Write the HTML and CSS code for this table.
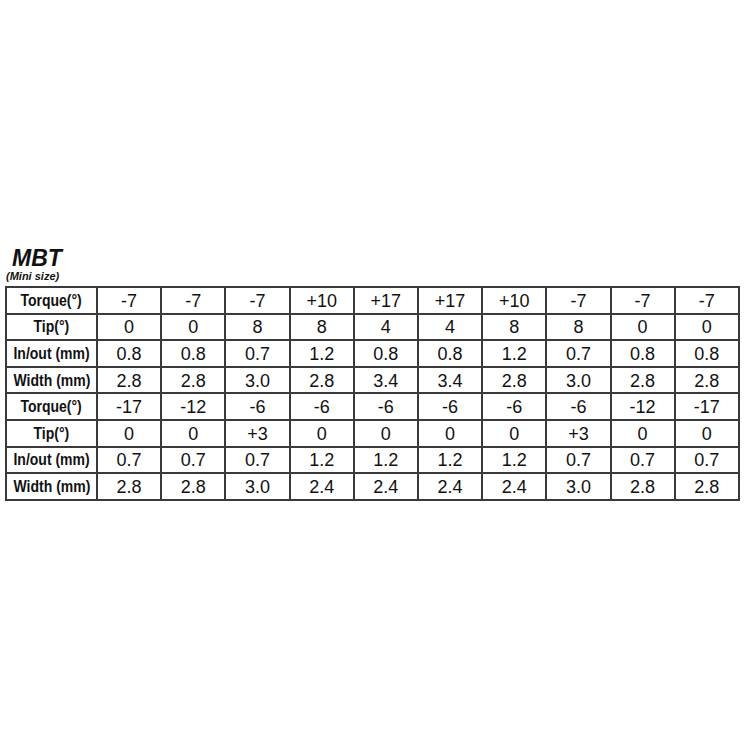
FILE: index.html
```html
<!DOCTYPE html>
<html>
<head>
<meta charset="utf-8">
<link rel="stylesheet" href="styles.css">
</head>
<body>
<div class="page">
  <div class="title">MBT</div>
  <div class="subtitle">(Mini size)</div>
  <table class="spec">
    <colgroup>
      <col class="c-head">
      <col><col><col><col><col><col><col><col><col><col>
    </colgroup>
    <tbody>
      <tr><th><span class="lbl">Torque(°)</span></th><td>-7</td><td>-7</td><td>-7</td><td>+10</td><td>+17</td><td>+17</td><td>+10</td><td>-7</td><td>-7</td><td>-7</td></tr>
      <tr><th><span class="lbl">Tip(°)</span></th><td>0</td><td>0</td><td>8</td><td>8</td><td>4</td><td>4</td><td>8</td><td>8</td><td>0</td><td>0</td></tr>
      <tr><th><span class="lbl">In/out (mm)</span></th><td>0.8</td><td>0.8</td><td>0.7</td><td>1.2</td><td>0.8</td><td>0.8</td><td>1.2</td><td>0.7</td><td>0.8</td><td>0.8</td></tr>
      <tr><th><span class="lbl">Width (mm)</span></th><td>2.8</td><td>2.8</td><td>3.0</td><td>2.8</td><td>3.4</td><td>3.4</td><td>2.8</td><td>3.0</td><td>2.8</td><td>2.8</td></tr>
      <tr><th><span class="lbl">Torque(°)</span></th><td>-17</td><td>-12</td><td>-6</td><td>-6</td><td>-6</td><td>-6</td><td>-6</td><td>-6</td><td>-12</td><td>-17</td></tr>
      <tr><th><span class="lbl">Tip(°)</span></th><td>0</td><td>0</td><td>+3</td><td>0</td><td>0</td><td>0</td><td>0</td><td>+3</td><td>0</td><td>0</td></tr>
      <tr><th><span class="lbl">In/out (mm)</span></th><td>0.7</td><td>0.7</td><td>0.7</td><td>1.2</td><td>1.2</td><td>1.2</td><td>1.2</td><td>0.7</td><td>0.7</td><td>0.7</td></tr>
      <tr><th><span class="lbl">Width (mm)</span></th><td>2.8</td><td>2.8</td><td>3.0</td><td>2.4</td><td>2.4</td><td>2.4</td><td>2.4</td><td>3.0</td><td>2.8</td><td>2.8</td></tr>
    </tbody>
  </table>
</div>
</body>
</html>
```

FILE: styles.css
```css
html, body {
  margin: 0;
  padding: 0;
  background: #ffffff;
}

.page {
  padding: 246px 0 0 5px;
  font-family: "Liberation Sans", Arial, sans-serif;
  color: #111111;
}

.title {
  font-size: 23px;
  line-height: 25px;
  height: 25px;
  font-weight: bold;
  font-style: italic;
  padding-left: 7px;
}

.subtitle {
  font-size: 11px;
  line-height: 11px;
  height: 11px;
  font-weight: bold;
  font-style: italic;
  margin-bottom: 4px;
  padding-left: 1px;
}

.spec {
  border-collapse: collapse;
  table-layout: fixed;
  width: 733px;
}

.spec col {
  width: 64.2px;
}

.spec col.c-head {
  width: 91px;
}

.spec th,
.spec td {
  border: 2px solid #3a3a3a;
  height: 22.6px;
  padding: 0;
  text-align: center;
  vertical-align: middle;
  white-space: nowrap;
}

.spec th {
  font-size: 16px;
  font-weight: bold;
  color: #111111;
  overflow: hidden;
}

.lbl {
  display: inline-block;
  transform: scaleX(0.875);
  transform-origin: center;
  padding-top: 1px;
}

.spec td {
  font-size: 18px;
  font-weight: normal;
  color: #111111;
  padding-top: 2px;
}
```
